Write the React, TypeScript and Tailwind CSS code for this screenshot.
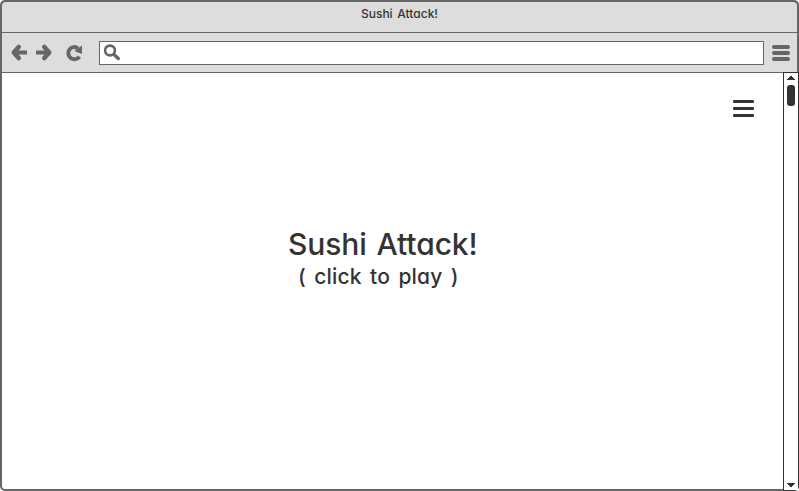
function ToolbarIcons() {
  return (
    <svg className="h-[39px] w-[97px] shrink-0" viewBox="2 33 97 39" fill="none" stroke="#666" strokeWidth="4.600">
      <path d="M18.700 47 L13.800 52.500 L18.700 58" strokeLinecap="round" strokeLinejoin="round" />
      <path d="M14 52.500 H27" strokeWidth="4" />
      <path d="M44.300 47 L49.200 52.500 L44.300 58" strokeLinecap="round" strokeLinejoin="round" />
      <path d="M49 52.500 H36" strokeWidth="4" />
      <path d="M79.400 56.600 A6.100 6.100 0 1 1 78 48.300" strokeWidth="3.900" />
      <path d="M82 45.500 V54 L74.300 51 Z" fill="#666" stroke="none" />
    </svg>
  );
}

function SearchIcon() {
  return (
    <svg className="h-[22px] w-6" viewBox="100 42 24 22" fill="none" stroke="#666">
      <circle cx="110" cy="50.500" r="4.900" strokeWidth="2.600" />
      <path d="M114 54.500 L118.300 58.500" strokeWidth="3.400" strokeLinecap="round" />
    </svg>
  );
}

function ScrollBar() {
  return (
    <div className="-mt-px flex w-[16px] shrink-0 flex-col items-center justify-between border border-[#333] bg-white">
      <div className="flex flex-col items-center">
        <svg className="mt-[3px] h-[4px] w-[8px]" viewBox="0 0 8 4" fill="#333" shapeRendering="crispEdges">
          <path d="M0 4 V3 H1 V2 H2 V1 H3 V0 H5 V1 H6 V2 H7 V3 H8 V4 Z" />
        </svg>
        <div className="mt-[5px] h-[21px] w-[8px] rounded-[3px] bg-[#333]" />
      </div>
      <svg className="mb-[3px] h-[4px] w-[8px]" viewBox="0 0 8 4" fill="#333" shapeRendering="crispEdges">
        <path d="M0 0 V1 H1 V2 H2 V3 H3 V4 H5 V3 H6 V2 H7 V1 H8 V0 Z" />
      </svg>
    </div>
  );
}

export default function App() {
  return (
    <div className="flex h-[491px] w-[799px] flex-col overflow-hidden rounded-[5px] bg-[#666] pl-[2px] pt-[2px] font-['Inter',sans-serif] text-[#333] [font-feature-settings:'cv11']">
      <header className="mr-[2px] flex h-[31px] shrink-0 justify-center rounded-t-[4px] border-b border-[#666] bg-[#ddd]">
        <span className="mt-[2px] text-[12px] leading-[20px] font-medium [word-spacing:1.5px]">Sushi Attack!</span>
      </header>
      <nav className="mr-[2px] flex h-[40px] shrink-0 items-start border-b border-[#666] bg-[#ddd]">
        <ToolbarIcons />
        <div className="mt-[8px] h-[24px] w-[665px] border border-[#666] bg-white">
          <SearchIcon />
        </div>
        <div className="ml-[8px] mt-[12px] flex w-[18px] flex-col gap-[2px]">
          <div className="h-[4px] rounded-full bg-[#666]" />
          <div className="h-[4px] rounded-full bg-[#666]" />
          <div className="h-[4px] rounded-full bg-[#666]" />
        </div>
      </nav>
      <main className="flex min-h-0 flex-1">
        <section className="mb-[2px] flex w-[781px] flex-col rounded-bl-[3px] bg-white">
          <div className="ml-[730.5px] mt-[27px] flex w-[21px] flex-col gap-[4px]">
            <div className="h-[3px] rounded-[1px] bg-[#333]" />
            <div className="h-[3px] rounded-[1px] bg-[#333]" />
            <div className="h-[3px] rounded-[1px] bg-[#333]" />
          </div>
          <div className="mt-[107px] pl-[286px]">
            <h1 className="text-[30px] leading-[40px] font-medium tracking-[-0.1px] whitespace-nowrap [word-spacing:2px]">Sushi Attack!</h1>
            <p className="ml-[10px] text-[21px] leading-[26px] font-medium tracking-[0.15px] whitespace-nowrap [word-spacing:2.7px]">( click to play )</p>
          </div>
        </section>
        <ScrollBar />
      </main>
    </div>
  );
}
